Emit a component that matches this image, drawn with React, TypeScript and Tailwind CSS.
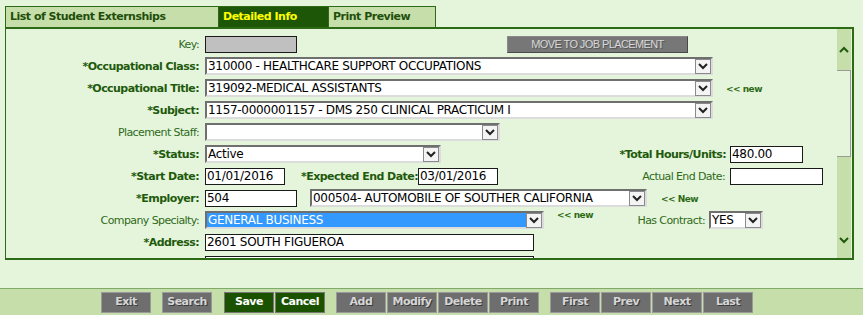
import { ReactNode } from "react";

const FONT = "font-['DejaVu_Sans',Verdana,sans-serif]";

const Chevron = ({ up = false, className = "" }: { up?: boolean; className?: string }) => (
  <svg width="10" height="7" viewBox="0 0 10 7" className={className}>
    <polyline
      points={up ? "1,6 5,2 9,6" : "1,1 5,5 9,1"}
      fill="none"
      stroke="currentColor"
      strokeWidth="2"
    />
  </svg>
);

const Label = ({ children, bold = true, w = "w-[193px]" }: { children: ReactNode; bold?: boolean; w?: string }) => (
  <div
    className={`${w} shrink-0 text-right text-[11px] leading-none ${
      bold ? "font-bold tracking-[-0.55px] text-[#1f5a0c]" : "tracking-[-0.6px] text-[#2f6a1a]"
    }`}
  >
    {children}
  </div>
);

const Select = ({
  value,
  w,
  hl = false,
}: {
  value: string;
  w: string;
  hl?: boolean;
}) => (
  <div
    className={`${w} flex h-[18px] shrink-0 items-center border-2 border-t-[#6f6f6f] border-l-[#6f6f6f] border-b-[#dcdcdc] border-r-[#dcdcdc] ${
      hl ? "bg-[#3399ff] text-white" : "bg-white text-black"
    }`}
  >
    <span className="flex-1 truncate pl-[1px] text-[12px] leading-none tracking-[-0.3px]">{value}</span>
    <span className="flex h-[15px] w-[16px] shrink-0 items-center justify-center border border-[#8a8a8a] bg-[#f4f4f4] text-[#222]">
      <Chevron />
    </span>
  </div>
);

const Input = ({ value = "", w, gray = false }: { value?: string; w: string; gray?: boolean }) => (
  <div
    className={`${w} flex h-[17px] shrink-0 items-center border border-[#1a1a1a] ${
      gray ? "bg-[#c0c0c0]" : "bg-white"
    } pl-[1px] text-[12px] leading-none tracking-[-0.3px] text-black`}
  >
    {value}
  </div>
);

const New = ({ children, className = "" }: { children: ReactNode; className?: string }) => (
  <span className={`shrink-0 text-[9px] font-bold tracking-[-0.5px] text-[#2d6a15] ${className}`}>{children}</span>
);

const Row = ({ children, h = "h-[22px]" }: { children: ReactNode; h?: string }) => (
  <div className={`flex ${h} items-center`}>{children}</div>
);

const ToolBtn = ({ label, active = false }: { label: string; active?: boolean }) => (
  <div
    className={`flex h-[21px] w-[50px] items-center justify-center border text-[11px] font-bold tracking-[-0.5px] ${
      active
        ? "border-[#777] bg-[#1a5200] text-white"
        : "border-[#9a9a9a] bg-[#6e6e6e] text-[#d6d6d6] [text-shadow:1px_1px_0_#3a3a3a]"
    }`}
  >
    {label}
  </div>
);

const TAB = "flex h-[21px] items-center pl-[4px] text-[11px] font-bold tracking-[-0.5px]";

export default function App() {
  return (
    <div className={`${FONT} flex h-[315px] w-[863px] flex-col overflow-hidden bg-[#e5f5dc]`}>
      {/* tabs */}
      <div className="flex pl-[5px] pt-[6px]">
        <div className={`${TAB} w-[214px] border border-b-0 border-[#2d6a15] bg-[#c6deaa] text-[#1f4f0b]`}>
          List of Student Externships
        </div>
        <div className={`${TAB} w-[109px] border-t border-[#2d6a15] bg-[#1c5606] text-[#ffff00]`}>
          Detailed Info
        </div>
        <div className={`${TAB} w-[108px] border border-b-0 border-[#2d6a15] bg-[#c6deaa] text-[#1f4f0b]`}>
          Print Preview
        </div>
      </div>

      {/* panel */}
      <div className="ml-[5px] flex h-[233px] w-[849px] overflow-hidden border-2 border-l border-[#2d6a15]">
        <div className="flex-1 overflow-hidden pt-[4px]">
          <Row>
            <Label bold={false}>Key:</Label>
            <div className="ml-[6px] flex items-center">
              <Input gray w="w-[92px]" />
              <div className="ml-[210px] flex h-[17px] w-[181px] items-center justify-center border border-[#4a4a4a] border-t-[#8a8a8a] border-l-[#8a8a8a] bg-[#777777] font-['Liberation_Sans',Arial,sans-serif] text-[11px] tracking-[-0.6px] text-[#d8d8d8] [text-shadow:1px_1px_0_#555]">
                MOVE TO JOB PLACEMENT
              </div>
            </div>
          </Row>
          <Row>
            <Label>*Occupational Class:</Label>
            <div className="ml-[6px] flex items-center">
              <Select w="w-[508px]" value="310000 - HEALTHCARE SUPPORT OCCUPATIONS" />
            </div>
          </Row>
          <Row>
            <Label>*Occupational Title:</Label>
            <div className="ml-[6px] flex items-center">
              <Select w="w-[508px]" value="319092-MEDICAL ASSISTANTS" />
              <New className="ml-[13px] mt-[4px]">&lt;&lt; new</New>
            </div>
          </Row>
          <Row>
            <Label>*Subject:</Label>
            <div className="ml-[6px] flex items-center">
              <Select w="w-[508px]" value="1157-0000001157 - DMS 250 CLINICAL PRACTICUM I" />
            </div>
          </Row>
          <Row>
            <Label bold={false}>Placement Staff:</Label>
            <div className="ml-[6px] flex items-center">
              <Select w="w-[295px]" value="" />
            </div>
          </Row>
          <Row>
            <Label>*Status:</Label>
            <div className="ml-[6px] flex items-center">
              <Select w="w-[236px]" value="Active" />
              <Label w="w-[285px]">*Total Hours/Units:</Label>
              <div className="ml-[4px]">
                <Input w="w-[73px]" value="480.00" />
              </div>
            </div>
          </Row>
          <Row>
            <Label>*Start Date:</Label>
            <div className="ml-[6px] flex items-center">
              <Input w="w-[80px]" value="01/01/2016" />
              <Label w="w-[133px]">*Expected End Date:</Label>
              <Input w="w-[80px]" value="03/01/2016" />
              <Label bold={false} w="w-[227px]">Actual End Date:</Label>
              <div className="ml-[5px]">
                <Input w="w-[93px]" />
              </div>
            </div>
          </Row>
          <Row>
            <Label>*Employer:</Label>
            <div className="ml-[6px] flex items-center">
              <Input w="w-[92px]" value="504" />
              <div className="ml-[13px]">
                <Select w="w-[337px]" value="000504- AUTOMOBILE OF SOUTHER CALIFORNIA" />
              </div>
              <New className="ml-[14px] mt-[4px]">&lt;&lt; New</New>
            </div>
          </Row>
          <Row>
            <Label bold={false}>Company Specialty:</Label>
            <div className="ml-[6px] flex items-center">
              <Select w="w-[339px]" value="GENERAL BUSINESS" hl />
              <New className="mb-[8px] ml-[13px] w-[63px]">&lt;&lt; new</New>
              <Label bold={false} w="w-[85px]">Has Contract:</Label>
              <div className="ml-[4px]">
                <Select w="w-[54px]" value="YES" />
              </div>
            </div>
          </Row>
          <Row>
            <Label>*Address:</Label>
            <div className="ml-[6px] flex items-center">
              <Input w="w-[329px]" value="2601 SOUTH FIGUEROA" />
            </div>
          </Row>
          <Row>
            <div className="w-[193px]" />
            <div className="ml-[6px] flex items-center">
              <Input w="w-[329px]" />
            </div>
          </Row>
        </div>

        {/* scrollbar */}
        <div className="mr-[1px] flex w-[14px] flex-col bg-[#c6deaa]">
          <div className="flex h-[41px] items-center justify-center text-[#1f5a0c]">
            <Chevron up />
          </div>
          <div className="h-[87px] border border-l-0 border-[#9a9a9a] bg-[#e5f5dc]" />
          <div className="flex flex-1 items-end justify-center pb-[14px] text-[#1f5a0c]">
            <Chevron />
          </div>
        </div>
      </div>

      <div className="h-[28px]" />

      {/* toolbar */}
      <div className="flex flex-1 items-start border-t border-[#7faa68] bg-[#c6deaa] pl-[101px] pt-[3px]">
        <ToolBtn label="Exit" />
        <div className="ml-[11px]">
          <ToolBtn label="Search" />
        </div>
        <div className="ml-[12px] flex gap-[1px]">
          <ToolBtn label="Save" active />
          <ToolBtn label="Cancel" active />
        </div>
        <div className="ml-[11px] flex gap-[1px]">
          <ToolBtn label="Add" />
          <ToolBtn label="Modify" />
          <ToolBtn label="Delete" />
          <ToolBtn label="Print" />
        </div>
        <div className="ml-[11px] flex gap-[1px]">
          <ToolBtn label="First" />
          <ToolBtn label="Prev" />
          <ToolBtn label="Next" />
          <ToolBtn label="Last" />
        </div>
      </div>
    </div>
  );
}
